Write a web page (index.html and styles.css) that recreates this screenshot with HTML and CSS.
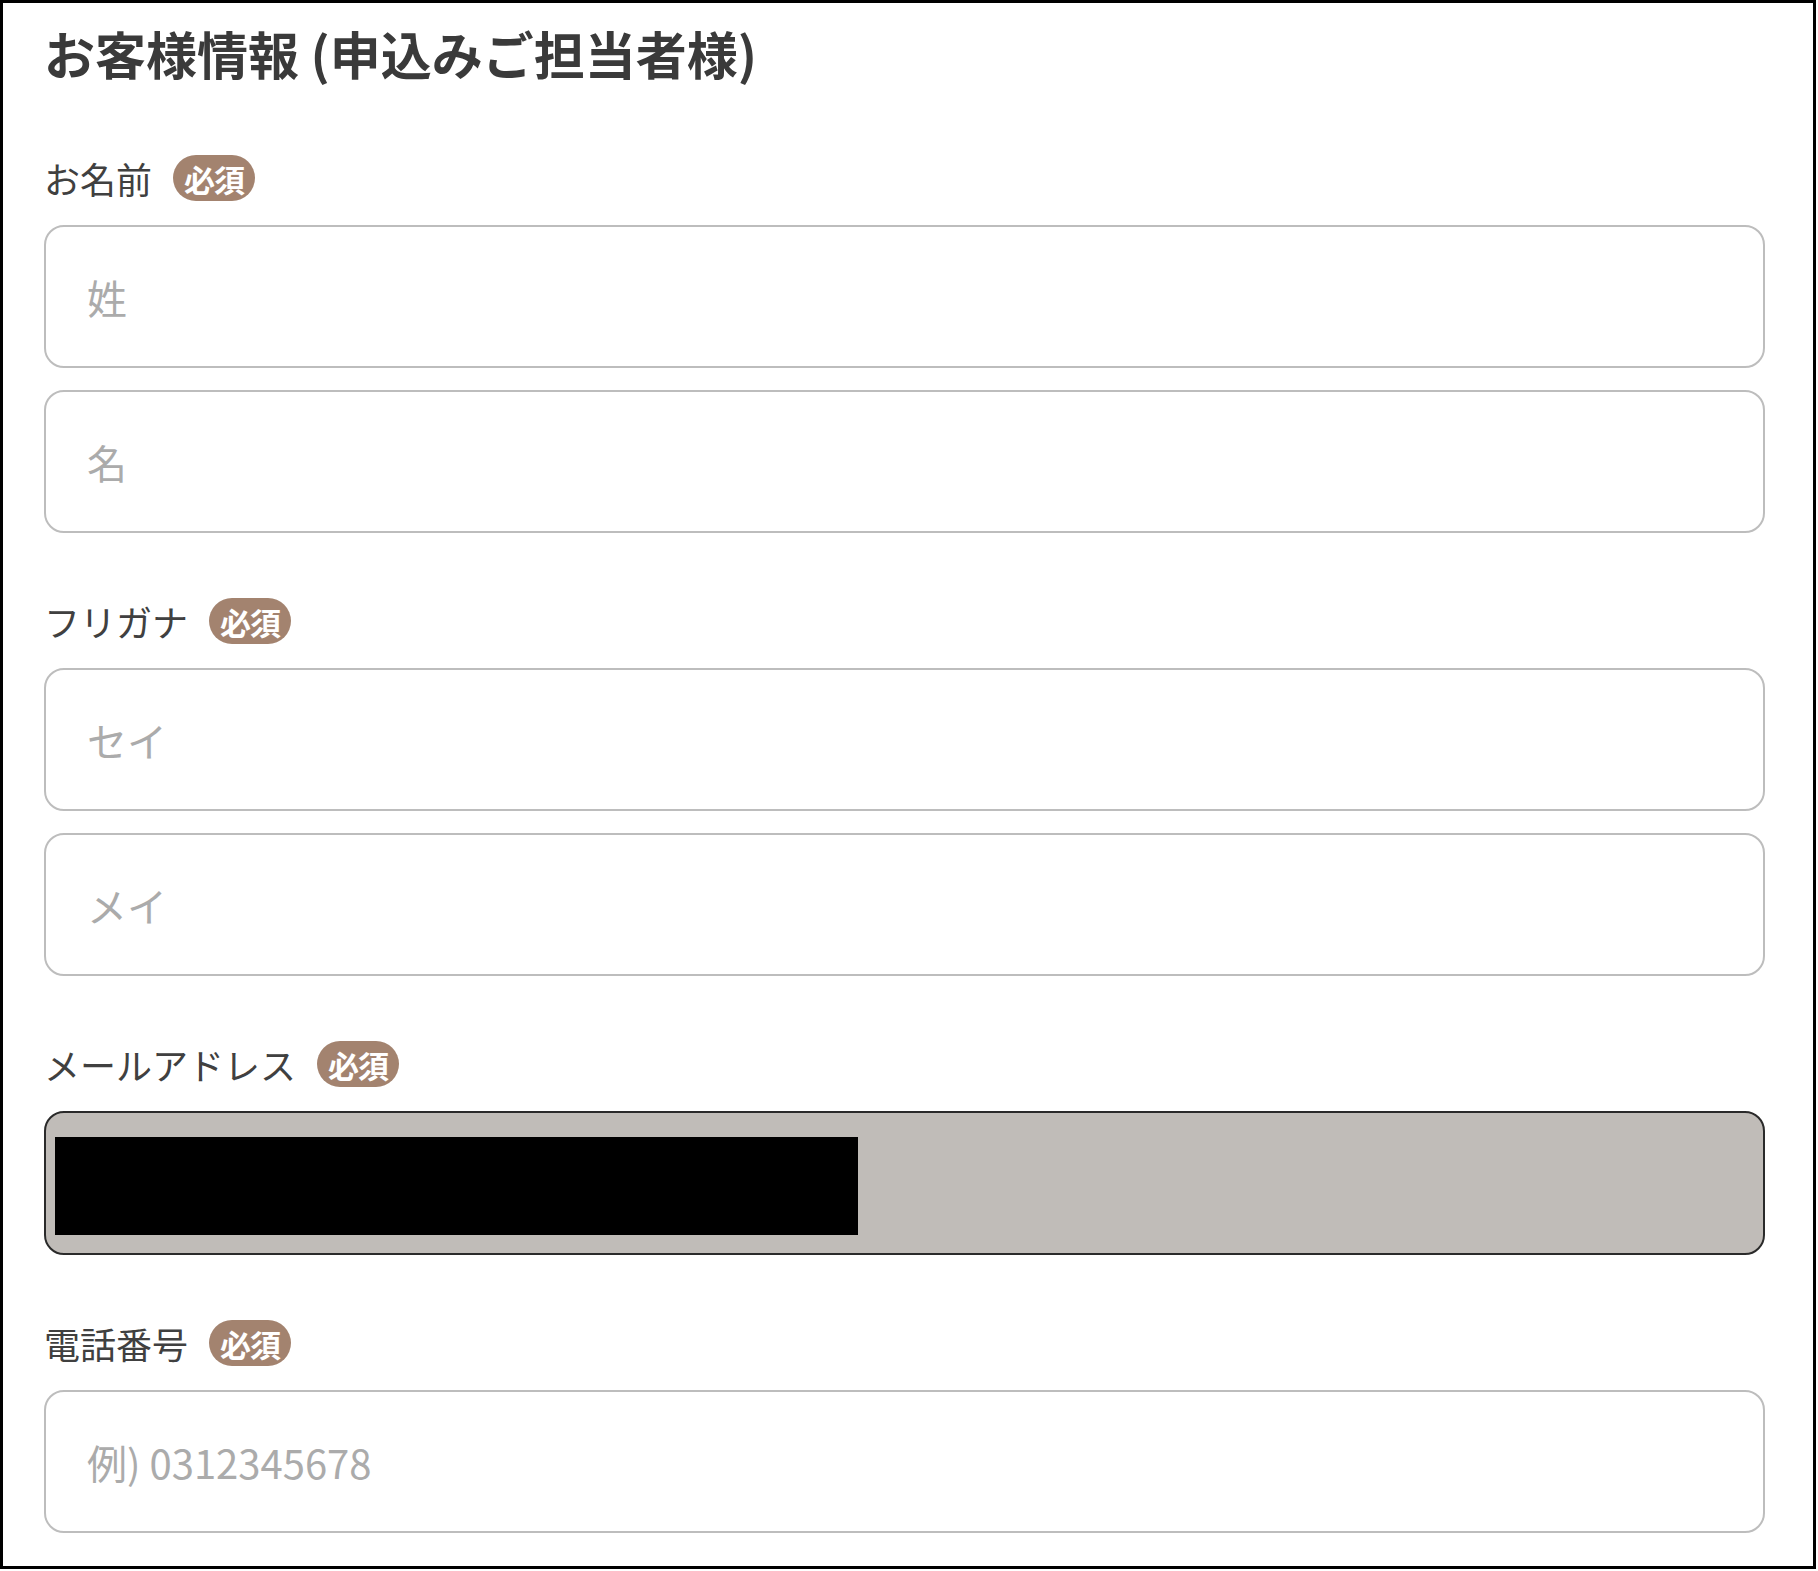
FILE: index.html
```html
<!DOCTYPE html>
<html lang="ja">
<head>
<meta charset="utf-8">
<title>お客様情報</title>
<link rel="stylesheet" href="styles.css">
</head>
<body>
<div class="card">
  <h2 class="title">お客様情報 (申込みご担当者様)</h2>
  <div class="form">
    <section class="group">
      <div class="label-row"><span class="label">お名前</span><span class="badge">必須</span></div>
      <div class="inputs">
        <input class="field" type="text" placeholder="姓">
        <input class="field" type="text" placeholder="名">
      </div>
    </section>
    <section class="group">
      <div class="label-row"><span class="label">フリガナ</span><span class="badge">必須</span></div>
      <div class="inputs">
        <input class="field" type="text" placeholder="セイ">
        <input class="field" type="text" placeholder="メイ">
      </div>
    </section>
    <section class="group">
      <div class="label-row"><span class="label">メールアドレス</span><span class="badge">必須</span></div>
      <div class="inputs">
        <div class="field field-filled"><span class="redact"></span></div>
      </div>
    </section>
    <section class="group">
      <div class="label-row"><span class="label">電話番号</span><span class="badge">必須</span></div>
      <div class="inputs">
        <input class="field" type="tel" placeholder="例) 0312345678">
      </div>
    </section>
  </div>
</div>
</body>
</html>
```
FILE: styles.css
```css
body {
  margin: 0;
  background: #fff;
}

.card {
  box-sizing: border-box;
  width: 1816px;
  height: 1569px;
  border: 3px solid #000;
  padding: 20px 48px 0 41px;
  font-family: "Noto Sans CJK JP", "Noto Sans", sans-serif;
  color: #444;
}

.title {
  margin: 0 0 72px;
  font-size: 51px;
  line-height: 60px;
  font-weight: 700;
  color: #3a3a3a;
}

.form {
  display: flex;
  flex-direction: column;
  gap: 65px;
}

.label-row {
  display: flex;
  align-items: center;
  gap: 21px;
  height: 46px;
  margin-bottom: 24px;
}

.label {
  font-size: 36px;
  line-height: 46px;
  color: #404040;
}

.badge {
  display: flex;
  align-items: center;
  justify-content: center;
  width: 82px;
  height: 46px;
  border-radius: 23px;
  background: #a3836f;
  color: #fff;
  font-size: 31px;
  font-weight: 700;
  line-height: 1;
  letter-spacing: -1px;
}

.inputs {
  display: flex;
  flex-direction: column;
  gap: 22px;
}

.field {
  display: block;
  box-sizing: border-box;
  width: 100%;
  height: 143px;
  margin: 0;
  padding: 0 41px;
  border: 2px solid #bdbdbd;
  border-radius: 20px;
  background: #fff;
  font-family: "Noto Sans CJK JP", "Noto Sans", sans-serif;
  font-size: 40px;
  color: #444;
  outline: none;
}

.field::placeholder {
  color: #ababab;
}

.field-filled {
  height: 144px;
  padding: 24px 9px;
  border-color: #2a2a2a;
  background: #c0bcb8;
}

.redact {
  display: block;
  width: 803px;
  height: 98px;
  background: #000;
}
```
